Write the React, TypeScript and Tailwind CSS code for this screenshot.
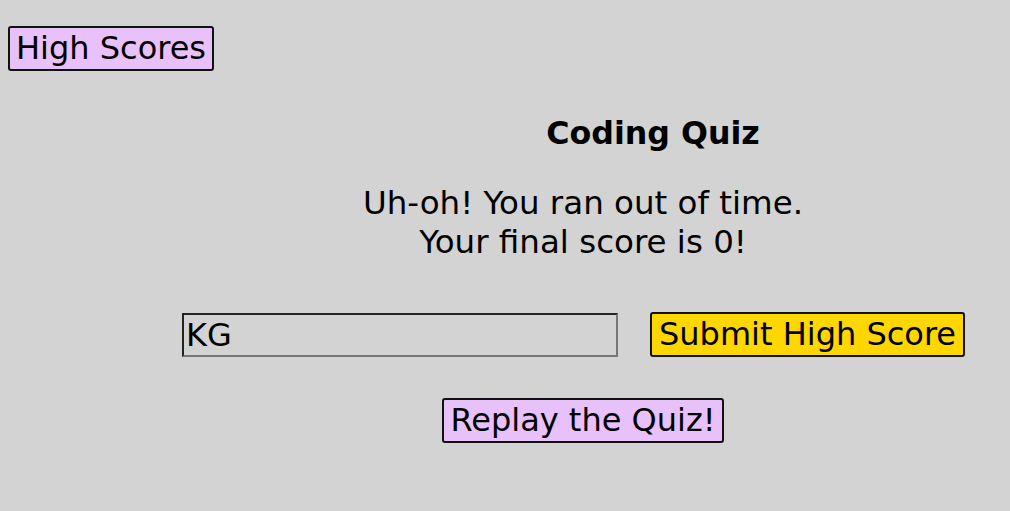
import React from "react";

const font = { fontFamily: '"DejaVu Sans", Verdana, sans-serif' };

const pinkButton =
  "rounded-[3px] border-2 border-[#111] bg-[#e8c1fa] px-[6px] py-px text-[32px] leading-[39px] text-black";

export default function App() {
  return (
    <div className="min-h-[511px] w-full bg-[#d3d3d3] text-black" style={font}>
      <header className="px-2 pt-[26px]">
        <button type="button" className={pinkButton}>
          High Scores
        </button>
      </header>
      <main className="flex flex-col items-center pl-[156px]">
        <h1 className="mt-[44px] pl-[140px] text-[31.7px] font-bold leading-[37px]">Coding Quiz</h1>
        <p className="mt-[32px] text-center text-[32.5px] leading-[39px]">
          Uh-oh! You ran out of time.
          <br />
          Your final score is 0!
        </p>
        <div className="mt-[50px] flex items-center gap-8 pr-[19px]">
          <input
            defaultValue="KG"
            className="h-[44px] w-[436px] border-2 border-t-[#222] border-l-[#222] border-r-[#767676] border-b-[#767676] bg-transparent px-[2px] text-[32px] leading-[37px] text-black outline-none"
            style={font}
          />
          <button
            type="button"
            className="rounded-[3px] border-2 border-[#111] bg-[#ffd700] px-[7px] py-px text-[32px] leading-[39px] text-black"
          >
            Submit High Score
          </button>
        </div>
        <button type="button" className={`${pinkButton} mt-[41px]`}>
          Replay the Quiz!
        </button>
      </main>
    </div>
  );
}
